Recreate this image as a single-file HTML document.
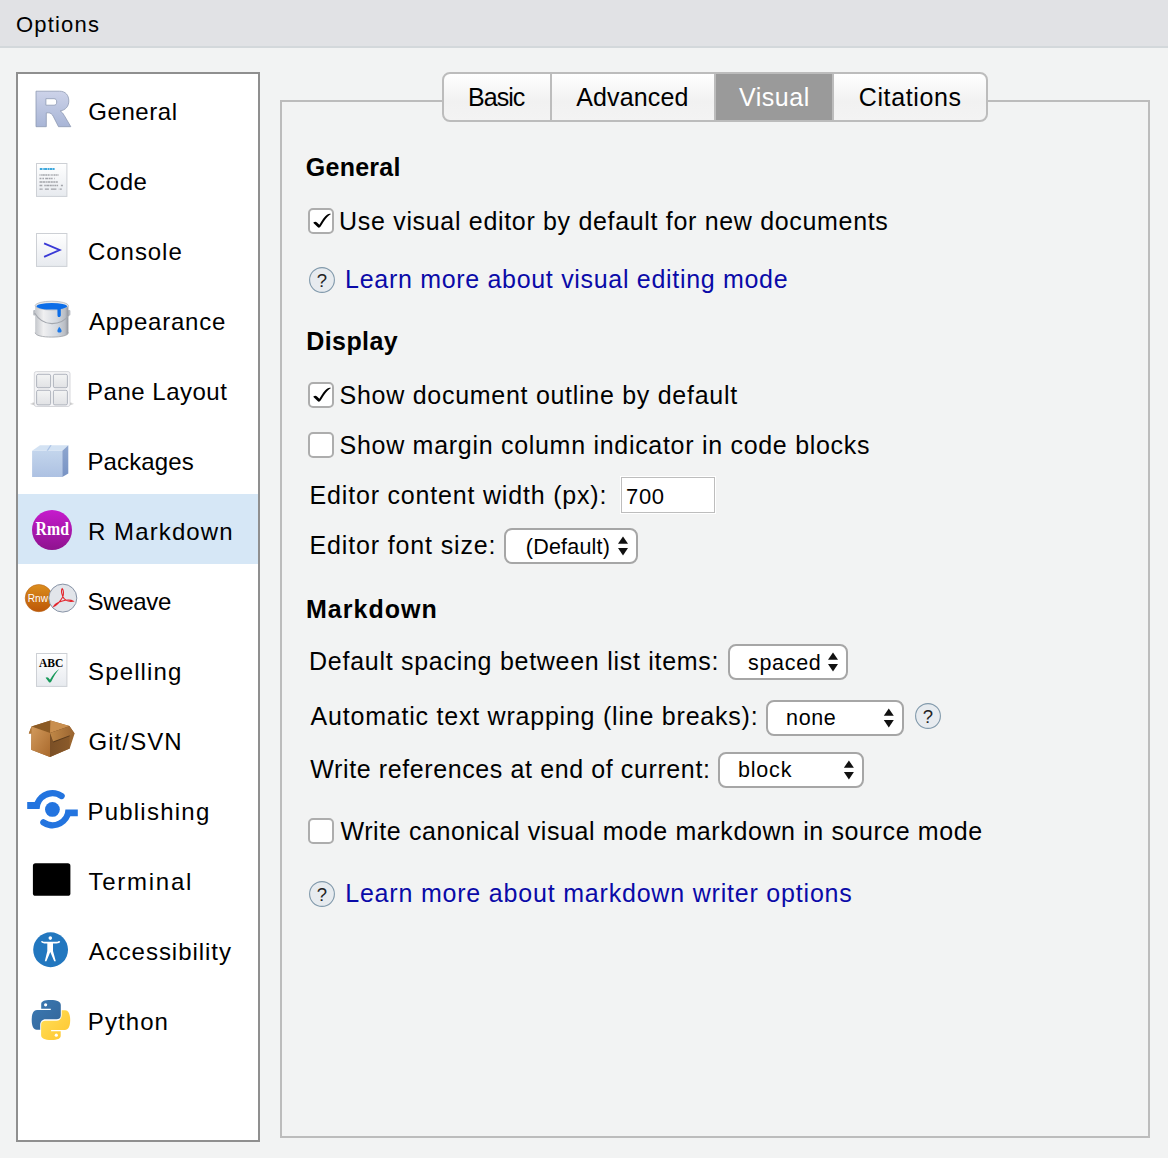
<!DOCTYPE html>
<html><head><meta charset="utf-8"><style>
*{box-sizing:border-box}
html,body{margin:0;padding:0}
body{width:1168px;height:1158px;overflow:hidden;background:#f2f3f3;position:relative;font-family:"Liberation Sans",sans-serif}
.abs{position:absolute}
.t{position:absolute;white-space:pre;font-family:"Liberation Sans",sans-serif}
.ov{position:absolute;left:0;top:0}
#titlebar{left:0;top:0;width:1168px;height:48px;background:#e1e2e5;border-bottom:2px solid #d3d8db}
#side{left:16px;top:72px;width:244px;height:1070px;background:#fff;border:2px solid #8f8f8f}
#sel{left:18px;top:494px;width:240px;height:70px;background:#d6e7f6}
#panel{left:280px;top:100px;width:870px;height:1038px;border:2px solid #bcbcbc}
#tabs{left:442px;top:72px;width:546px;height:50px;border:2px solid #bcbcbc;border-radius:8px;background:linear-gradient(#ffffff,#f1f1f1 60%,#f3f3f3);overflow:hidden}
.sep{position:absolute;top:0;width:2px;height:46px;background:#bcbcbc}
#vis{position:absolute;left:272px;top:0;width:116px;height:46px;background:#9a9a9a}
.cb{position:absolute;width:26px;height:26px;border:2px solid #adadad;border-radius:5px;background:#fff}
#inp{left:621px;top:477px;width:94px;height:36px;border:1px solid #bdbdbd;background:#fff;box-shadow:0 0 0 1px #fff}
.selb{position:absolute;border:2px solid #a6a6a6;border-radius:8px;background:#fff}
</style></head><body>
<div id="titlebar" class="abs"></div>
<div id="side" class="abs"></div>
<div id="sel" class="abs"></div>
<div id="panel" class="abs"></div>
<div id="tabs" class="abs"><div class="sep" style="left:106px"></div><div id="vis"></div><div class="sep" style="left:270px"></div><div class="sep" style="left:388px"></div></div>
<div class="cb" style="left:308px;top:208px"></div>
<div class="cb" style="left:308px;top:382px"></div>
<div class="cb" style="left:308px;top:432px"></div>
<div class="cb" style="left:308px;top:818px"></div>
<div id="inp" class="abs"></div>
<div class="selb" style="left:504px;top:528px;width:134px;height:36px"></div>
<div class="selb" style="left:728px;top:644px;width:120px;height:36px"></div>
<div class="selb" style="left:766px;top:700px;width:138px;height:36px"></div>
<div class="selb" style="left:718px;top:752px;width:146px;height:36px"></div>

<svg class="ov" width="1168" height="1158" viewBox="0 0 1168 1158">
<defs>
 <linearGradient id="gR" x1="0" y1="0" x2="0" y2="1"><stop offset="0" stop-color="#cdd3e9"/><stop offset="1" stop-color="#a8b5d6"/></linearGradient>
 <linearGradient id="gDoc" x1="0" y1="0" x2="0" y2="1"><stop offset="0" stop-color="#ffffff"/><stop offset="1" stop-color="#e7eaef"/></linearGradient>
 <linearGradient id="gBucket" x1="0" y1="0" x2="1" y2="0"><stop offset="0" stop-color="#c4c7cc"/><stop offset="0.25" stop-color="#f0f0f1"/><stop offset="0.65" stop-color="#d3d8df"/><stop offset="0.9" stop-color="#b9bdc4"/><stop offset="1" stop-color="#8f939b"/></linearGradient>
 <linearGradient id="gPane" x1="0" y1="0" x2="0" y2="1"><stop offset="0" stop-color="#f3f4f4"/><stop offset="1" stop-color="#e1e2e5"/></linearGradient>
 <linearGradient id="gPkgF" x1="0" y1="0" x2="0" y2="1"><stop offset="0" stop-color="#c3d5ec"/><stop offset="1" stop-color="#adc1e2"/></linearGradient>
 <linearGradient id="gPkgR" x1="0" y1="0" x2="0" y2="1"><stop offset="0" stop-color="#8ea6cf"/><stop offset="1" stop-color="#7893c4"/></linearGradient>
 <linearGradient id="gRmd" x1="0" y1="0" x2="0" y2="1"><stop offset="0" stop-color="#c61bcd"/><stop offset="1" stop-color="#8e138e"/></linearGradient>
 <linearGradient id="gRnw" x1="0" y1="0" x2="0" y2="1"><stop offset="0" stop-color="#db8e1d"/><stop offset="1" stop-color="#bd5707"/></linearGradient>
 <linearGradient id="gBoxF" x1="0" y1="0" x2="1" y2="1"><stop offset="0" stop-color="#d29a5c"/><stop offset="1" stop-color="#a9692c"/></linearGradient>
 <linearGradient id="gBoxR" x1="0" y1="0" x2="1" y2="0"><stop offset="0" stop-color="#7a4f26"/><stop offset="1" stop-color="#8a5a2a"/></linearGradient>
 <linearGradient id="gFlap" x1="0" y1="0" x2="1" y2="0"><stop offset="0" stop-color="#c08847"/><stop offset="1" stop-color="#9a6430"/></linearGradient>
 <linearGradient id="gPyB" x1="0" y1="0" x2="1" y2="1"><stop offset="0" stop-color="#3b7ab4"/><stop offset="1" stop-color="#346598"/></linearGradient>
 <linearGradient id="gPyY" x1="0" y1="0" x2="1" y2="1"><stop offset="0" stop-color="#ffc52e"/><stop offset="1" stop-color="#ffe05a"/></linearGradient>
 <radialGradient id="gShadow" cx="0.5" cy="0.5" r="0.5"><stop offset="0" stop-color="#555" stop-opacity="1"/><stop offset="0.7" stop-color="#777" stop-opacity="0.8"/><stop offset="1" stop-color="#888" stop-opacity="0"/></radialGradient>
</defs>

<!-- General: R -->
<g transform="translate(28,84)">
 <path fill-rule="evenodd" fill="url(#gR)" stroke="#8e99b3" stroke-width="0.8" d="M8,7.2 H31.5 C37.6,7.2 40.8,11.2 40.8,17 C40.8,22.4 37.6,26 32.2,27 C33.9,28 35,29.4 36.2,31.4 L42.8,42.7 H30.5 L25.2,32.2 C24.1,30 22.6,28.8 20.2,28.8 H18.3 V42.7 H8 Z M17.9,14.7 H26 C27.8,14.7 28.7,16 28.7,18 C28.7,20 27.8,21.2 26,21.2 H17.9 Z"/>
</g>

<!-- Code -->
<g transform="translate(28,154)">
 <rect x="8.5" y="9.5" width="30.4" height="32.9" fill="url(#gDoc)" stroke="#cdd0d5" stroke-width="1"/>
 <line x1="11.8" y1="14.9" x2="27" y2="14.9" stroke="#1e9ad8" stroke-width="2" stroke-dasharray="2.2 0.5 1.2 0.4 3 0.5 1.5 0.4 2.5 0.4" opacity="0.85"/>
 <g stroke="#6f7178" stroke-width="1.3" opacity="0.6">
  <line x1="11.5" y1="21" x2="31.8" y2="21" stroke-dasharray="0.9 0.5 0.9 0.5 2.5 0.5 1.8 0.5 2 1 1.2 0.5 0.8 0.5 2 0.5 1.5"/>
  <line x1="11.5" y1="24.5" x2="27.5" y2="24.5" stroke-dasharray="1.5 0.6 0.8 0.4 1.2 1.2 3 0.6 1.8 0.5 1.5"/>
  <line x1="11.5" y1="28" x2="32.7" y2="28" stroke-dasharray="3 0.4 2.6 0.6 1.5 0.4 2.5 0.5 1.8 0.5 2.2 0.5 1.8"/>
  <line x1="11.5" y1="31.5" x2="35" y2="31.5" stroke-dasharray="2.8 2 1.5 0.5 2.8 0.5 2.2 0.5 1.5 0.6 2 0.5 1.2"/>
  <line x1="11.5" y1="35.1" x2="37" y2="35.1" stroke-dasharray="2.4 0.4 0.6 2 4 2 5.5"/>
 </g>
</g>

<!-- Console -->
<g transform="translate(28,224)">
 <rect x="8.5" y="9.5" width="30.4" height="32.9" fill="url(#gDoc)" stroke="#cdd0d5" stroke-width="1"/>
 <polyline points="16.1,19.4 31.6,26 16.1,32.8" fill="none" stroke="#3939d6" stroke-width="1.9"/>
</g>

<!-- Appearance: bucket -->
<g transform="translate(26,294)">
 <rect x="7.2" y="16" width="2.6" height="5.5" rx="1" fill="#b8bcc2"/>
 <rect x="41.8" y="16" width="2.6" height="5.5" rx="1" fill="#b8bcc2"/>
 <path d="M9.2,11.8 V38.6 C9.2,41.6 16.6,43.1 25.8,43.1 C35,43.1 42.4,41.6 42.4,38.6 V11.8 Z" fill="url(#gBucket)"/>
 <path d="M9.2,38.6 C9.2,41.6 16.6,43.1 25.8,43.1 C35,43.1 42.4,41.6 42.4,38.6" fill="none" stroke="#9a9ea5" stroke-width="0.8"/>
 <ellipse cx="25.8" cy="11.6" rx="16.6" ry="4.4" fill="#e4e6e8" stroke="#b4b8be" stroke-width="0.8"/>
 <ellipse cx="25.8" cy="12.3" rx="15.3" ry="3.3" fill="#0b6de8"/>
 <path d="M31.4,14.2 H34.8 V21 C34.8,22.6 33.9,23 33.1,23 C32.2,23 31.5,22.6 31.5,21.2 Z" fill="#0b6de8"/>
 <path d="M33.1,32.8 C34.6,34.4 35.6,35.8 35.6,37 C35.6,38 34.7,38.6 33.6,38.6 C32.3,38.6 31.4,38 31.4,37 C31.4,35.6 32.4,34.4 33.1,32.8 Z" fill="#1a78ea"/>
 <path d="M8.6,19 C12.5,25.5 18.5,29.6 26,29.6 C33.6,29.6 39.5,26 43,21" fill="none" stroke="#a3a7ae" stroke-width="1.1"/>
</g>

<!-- Pane Layout -->
<g transform="translate(26,364)">
 <ellipse cx="26" cy="39.8" rx="22.5" ry="3.2" fill="url(#gShadow)"/>
 <rect x="8.3" y="7.6" width="35.7" height="34.9" rx="2" fill="#f4f4f6" stroke="#d2d4d8" stroke-width="0.9"/>
 <g fill="url(#gPane)" stroke="#a9aeb8" stroke-width="0.9">
  <rect x="10.6" y="10.3" width="14" height="13.4" rx="1.5"/>
  <rect x="27.4" y="10.3" width="14" height="13.4" rx="1.5"/>
  <rect x="10.6" y="26.3" width="14" height="14.6" rx="1.5"/>
  <rect x="27.4" y="26.3" width="14" height="14.6" rx="1.5"/>
 </g>
</g>

<!-- Packages -->
<g transform="translate(26,434)">
 <polygon points="6.1,16.8 14,11.2 42.3,11.2 36.3,16.8" fill="#d3e2f3"/>
 <polygon points="20.6,16.8 24.2,11.2 25.6,11.2 22,16.8" fill="#a9c1e5"/>
 <rect x="6.1" y="16.8" width="30.2" height="26.2" fill="url(#gPkgF)"/>
 <polygon points="36.3,16.8 42.3,11.2 42.3,39.5 36.3,43" fill="url(#gPkgR)"/>
</g>

<!-- R Markdown -->
<circle cx="52" cy="530" r="20" fill="url(#gRmd)"/>
<text x="35.6" y="535.4" font-family="Liberation Serif" font-weight="700" font-size="19" fill="#fff" textLength="33.4" lengthAdjust="spacingAndGlyphs">Rmd</text>

<!-- Sweave -->
<circle cx="38.8" cy="598.1" r="13.6" fill="url(#gRnw)" stroke="#b8651a" stroke-width="0.6"/>
<text x="27.8" y="601.6" font-family="Liberation Sans" font-size="11.5" fill="#fff" textLength="20.3" lengthAdjust="spacingAndGlyphs">Rnw</text>
<circle cx="62.8" cy="598.1" r="14" fill="#e2e5ea" stroke="#8793a6" stroke-width="1"/>
<g fill="none" stroke="#e3242b" stroke-width="1.1">
 <path d="M62.2,588.6 C61.2,590 61.5,593.5 63,597 C64.5,600 68.5,601.8 73.2,601.2 C71,599.6 66,599.8 61.5,601.2 C57.5,602.5 54.5,604.5 53.6,606.6 C56.2,605.4 59.8,601.8 62.6,597.2 C64,594 63.6,590 62.2,588.6 Z"/>
</g>

<!-- Spelling -->
<g transform="translate(28,644)">
 <rect x="8.5" y="9.5" width="30.4" height="32.9" fill="url(#gDoc)" stroke="#cdd0d5" stroke-width="1"/>
 <text x="11" y="22.9" font-family="Liberation Serif" font-weight="700" font-size="12" fill="#000" textLength="24.4" lengthAdjust="spacingAndGlyphs">ABC</text>
 <path d="M17.6,33.8 C18.5,33 19.5,33 20.3,33.8 L22,35.8 C24.5,31.2 27.6,27 31.3,25 C28.5,28 25.6,32.5 23.3,37.6 C22.6,38.7 21.5,38.7 20.8,37.9 Z" fill="#189a5a"/>
</g>

<!-- Git/SVN box -->
<g transform="translate(24,714)">
 <polygon points="7.5,12.5 26.5,6.5 45.5,12 50.6,19.6 45.7,34.5 26,43 7.2,35.8 7.4,19.6 4.8,19.6" fill="#9a6630"/>
 <polygon points="7.5,12.5 26.5,6.5 26,19" fill="#8b5a24"/>
 <polygon points="26.5,6.5 45.5,12 26,19" fill="#c98f4f"/>
 <polygon points="7.5,12.5 4.8,19.6 7.4,19.6" fill="#b27838"/>
 <polygon points="7.5,12.5 26,19 26,43 7.2,35.8" fill="url(#gBoxF)"/>
 <polygon points="26,19 45.5,12.2 45.7,34.5 26,43" fill="url(#gBoxR)"/>
 <polygon points="26,19.2 29.2,28.4 45.6,22.2 45.6,20.5" fill="#4e3218" opacity="0.8"/>
 <polygon points="26,19 45.5,12.2 50.6,19.6 29,27.6" fill="url(#gFlap)"/>
</g>

<!-- Publishing -->
<g transform="translate(22,784)" fill="#2374df">
 <circle cx="30.4" cy="25.4" r="7.4"/>
 <path d="M5.2,18.1 H12.66 A19.2,19.2 0 0 1 41.51,9.47 A3.15,3.15 0 0 1 37.90,14.63 A12.9,12.9 0 0 0 17.60,24.9 H5.2 Z"/>
 <path transform="rotate(180 30.5 25.2)" d="M5.2,18.1 H12.66 A19.2,19.2 0 0 1 41.51,9.47 A3.15,3.15 0 0 1 37.90,14.63 A12.9,12.9 0 0 0 17.60,24.9 H5.2 Z"/>
</g>

<!-- Terminal -->
<rect x="32.9" y="863.2" width="37.5" height="32.6" rx="2.6" fill="#000"/>

<!-- Accessibility -->
<g transform="translate(24,924)">
 <circle cx="26.6" cy="25.75" r="17.4" fill="#2277bf"/>
 <circle cx="26.3" cy="14.1" r="1.8" fill="#fff"/>
 <path fill="#fff" d="M17.2,17.6 C17.6,16.8 18.4,17 19.5,17.8 H33.5 C34.6,17 35.6,16.8 36.2,17.7 C35.8,18.7 34.5,19.2 32.4,19.4 H29 V27 L31.8,37.2 H30.2 L26.3,28 L22.4,37.2 H20.8 L23.3,27 V19.4 H20.2 C18.2,19.2 17.4,18.6 17.2,17.6 Z"/>
</g>

<!-- Python -->
<g transform="translate(24,994)">
 <path fill="url(#gPyB)" d="M17.2,14.7 V10.2 C17.2,7.4 20,6 26.6,6 C33.2,6 36.8,7.6 36.8,11 V21.6 C36.8,24 35,25.2 32.6,25.2 H21.6 C18.4,25.2 16.2,27.6 16.2,31 V35.8 H12.6 C9.6,35.8 7.7,32 7.7,26 C7.7,19.6 9.6,16 13,16 H26.8 V14.7 Z"/>
 <circle cx="21.6" cy="10.8" r="1.6" fill="#fff"/>
 <g transform="rotate(180 26.95 26)">
  <path fill="url(#gPyY)" d="M17.2,14.7 V10.2 C17.2,7.4 20,6 26.6,6 C33.2,6 36.8,7.6 36.8,11 V21.6 C36.8,24 35,25.2 32.6,25.2 H21.6 C18.4,25.2 16.2,27.6 16.2,31 V35.8 H12.6 C9.6,35.8 7.7,32 7.7,26 C7.7,19.6 9.6,16 13,16 H26.8 V14.7 Z"/>
  <circle cx="21.6" cy="10.8" r="1.6" fill="#fff"/>
 </g>
</g>

<!-- checkmarks -->
<path transform="translate(308,208)" d="M5.2,14.8 C6.5,13.3 8,13.4 9,14.4 L11.4,16.7 C14,12 16.8,8.3 19,6.7 C20.6,5.6 22,5.5 23,5.9 C20,7.6 16.2,12.2 12.6,18.6 C11.9,19.8 10.6,20.1 9.6,19.1 Z" fill="#000"/>
<path transform="translate(308,382)" d="M5.2,14.8 C6.5,13.3 8,13.4 9,14.4 L11.4,16.7 C14,12 16.8,8.3 19,6.7 C20.6,5.6 22,5.5 23,5.9 C20,7.6 16.2,12.2 12.6,18.6 C11.9,19.8 10.6,20.1 9.6,19.1 Z" fill="#000"/>

<!-- help icons -->
<circle cx="322" cy="280" r="12.4" fill="#e7ebef" stroke="#8199ab" stroke-width="1.1"/><text x="322" y="286.6" text-anchor="middle" font-family="Liberation Sans" font-size="18.5" fill="#222">?</text>
<circle cx="928" cy="716" r="12.4" fill="#e7ebef" stroke="#8199ab" stroke-width="1.1"/><text x="928" y="722.6" text-anchor="middle" font-family="Liberation Sans" font-size="18.5" fill="#222">?</text>
<circle cx="322" cy="894" r="12.4" fill="#e7ebef" stroke="#8199ab" stroke-width="1.1"/><text x="322" y="900.6" text-anchor="middle" font-family="Liberation Sans" font-size="18.5" fill="#222">?</text>

<!-- select arrows -->
<path d="M618.0,543.8 L623.0,536.4 L628.0,543.8 Z" fill="#111"/><path d="M618.0,548.0 L623.0,555.4 L628.0,548.0 Z" fill="#111"/>
<path d="M828.0,659.8 L833.0,652.4 L838.0,659.8 Z" fill="#111"/><path d="M828.0,664.0 L833.0,671.4 L838.0,664.0 Z" fill="#111"/>
<path d="M883.8,715.8 L888.8,708.4 L893.8,715.8 Z" fill="#111"/><path d="M883.8,720.0 L888.8,727.4 L893.8,720.0 Z" fill="#111"/>
<path d="M843.9,767.8 L848.9,760.4 L853.9,767.8 Z" fill="#111"/><path d="M843.9,772.0 L848.9,779.4 L853.9,772.0 Z" fill="#111"/>
</svg>

<div class="t" style="left:16.0px;top:13.9px;font-size:22px;line-height:22px;letter-spacing:1.183px;color:#000;">Options</div>
<div class="t" style="left:88.3px;top:100.0px;font-size:24px;line-height:24px;letter-spacing:0.55px;color:#000;">General</div>
<div class="t" style="left:88.0px;top:170.0px;font-size:24px;line-height:24px;letter-spacing:0.5px;color:#000;">Code</div>
<div class="t" style="left:88.0px;top:240.0px;font-size:24px;line-height:24px;letter-spacing:0.95px;color:#000;">Console</div>
<div class="t" style="left:89.0px;top:310.0px;font-size:24px;line-height:24px;letter-spacing:0.756px;color:#000;">Appearance</div>
<div class="t" style="left:87.0px;top:380.0px;font-size:24px;line-height:24px;letter-spacing:0.51px;color:#000;">Pane Layout</div>
<div class="t" style="left:87.4px;top:450.0px;font-size:24px;line-height:24px;letter-spacing:0.143px;color:#000;">Packages</div>
<div class="t" style="left:87.9px;top:520.0px;font-size:24px;line-height:24px;letter-spacing:1.111px;color:#000;">R Markdown</div>
<div class="t" style="left:87.5px;top:590.0px;font-size:24px;line-height:24px;letter-spacing:-0.3px;color:#000;">Sweave</div>
<div class="t" style="left:88.0px;top:660.0px;font-size:24px;line-height:24px;letter-spacing:1.143px;color:#000;">Spelling</div>
<div class="t" style="left:88.4px;top:730.0px;font-size:24px;line-height:24px;letter-spacing:1.1px;color:#000;">Git/SVN</div>
<div class="t" style="left:87.4px;top:800.0px;font-size:24px;line-height:24px;letter-spacing:1.233px;color:#000;">Publishing</div>
<div class="t" style="left:88.5px;top:870.0px;font-size:24px;line-height:24px;letter-spacing:1.729px;color:#000;">Terminal</div>
<div class="t" style="left:88.7px;top:940.0px;font-size:24px;line-height:24px;letter-spacing:0.967px;color:#000;">Accessibility</div>
<div class="t" style="left:87.8px;top:1010.0px;font-size:24px;line-height:24px;letter-spacing:1.08px;color:#000;">Python</div>
<div class="t" style="left:468.0px;top:85.0px;font-size:25px;line-height:25px;letter-spacing:-0.975px;color:#000;">Basic</div>
<div class="t" style="left:576.2px;top:85.0px;font-size:25px;line-height:25px;letter-spacing:0.157px;color:#000;">Advanced</div>
<div class="t" style="left:739.0px;top:85.0px;font-size:25px;line-height:25px;letter-spacing:0.52px;color:#fff;">Visual</div>
<div class="t" style="left:858.7px;top:85.0px;font-size:25px;line-height:25px;letter-spacing:0.637px;color:#000;">Citations</div>
<div class="t" style="left:305.8px;top:155.2px;font-size:25px;line-height:25px;letter-spacing:0.25px;color:#000;font-weight:700;">General</div>
<div class="t" style="left:306.3px;top:329.4px;font-size:25px;line-height:25px;letter-spacing:0.4px;color:#000;font-weight:700;">Display</div>
<div class="t" style="left:306.0px;top:596.6px;font-size:25px;line-height:25px;letter-spacing:1.014px;color:#000;font-weight:700;">Markdown</div>
<div class="t" style="left:339.1px;top:208.7px;font-size:25px;line-height:25px;letter-spacing:0.676px;color:#000;">Use visual editor by default for new documents</div>
<div class="t" style="left:339.6px;top:382.9px;font-size:25px;line-height:25px;letter-spacing:0.719px;color:#000;">Show document outline by default</div>
<div class="t" style="left:339.6px;top:433.1px;font-size:25px;line-height:25px;letter-spacing:0.707px;color:#000;">Show margin column indicator in code blocks</div>
<div class="t" style="left:340.4px;top:819.0px;font-size:25px;line-height:25px;letter-spacing:0.616px;color:#000;">Write canonical visual mode markdown in source mode</div>
<div class="t" style="left:345.1px;top:266.6px;font-size:25px;line-height:25px;letter-spacing:0.691px;color:#0a0aa8;">Learn more about visual editing mode</div>
<div class="t" style="left:345.2px;top:880.6px;font-size:25px;line-height:25px;letter-spacing:0.805px;color:#0a0aa8;">Learn more about markdown writer options</div>
<div class="t" style="left:309.6px;top:482.6px;font-size:25px;line-height:25px;letter-spacing:0.812px;color:#000;">Editor content width (px):</div>
<div class="t" style="left:309.6px;top:532.6px;font-size:25px;line-height:25px;letter-spacing:0.85px;color:#000;">Editor font size:</div>
<div class="t" style="left:309.1px;top:648.8px;font-size:25px;line-height:25px;letter-spacing:0.721px;color:#000;">Default spacing between list items:</div>
<div class="t" style="left:310.6px;top:704.4px;font-size:25px;line-height:25px;letter-spacing:0.778px;color:#000;">Automatic text wrapping (line breaks):</div>
<div class="t" style="left:310.3px;top:756.5px;font-size:25px;line-height:25px;letter-spacing:0.609px;color:#000;">Write references at end of current:</div>
<div class="t" style="left:626.1px;top:485.7px;font-size:22px;line-height:22px;letter-spacing:0.65px;color:#000;">700</div>
<div class="t" style="left:525.8px;top:536.7px;font-size:21.5px;line-height:21.5px;letter-spacing:0.213px;color:#000;">(Default)</div>
<div class="t" style="left:748.0px;top:652.7px;font-size:21.5px;line-height:21.5px;letter-spacing:0.68px;color:#000;">spaced</div>
<div class="t" style="left:786.1px;top:708.4px;font-size:21.5px;line-height:21.5px;letter-spacing:0.633px;color:#000;">none</div>
<div class="t" style="left:738.0px;top:760.1px;font-size:21.5px;line-height:21.5px;letter-spacing:0.8px;color:#000;">block</div>
</body></html>
